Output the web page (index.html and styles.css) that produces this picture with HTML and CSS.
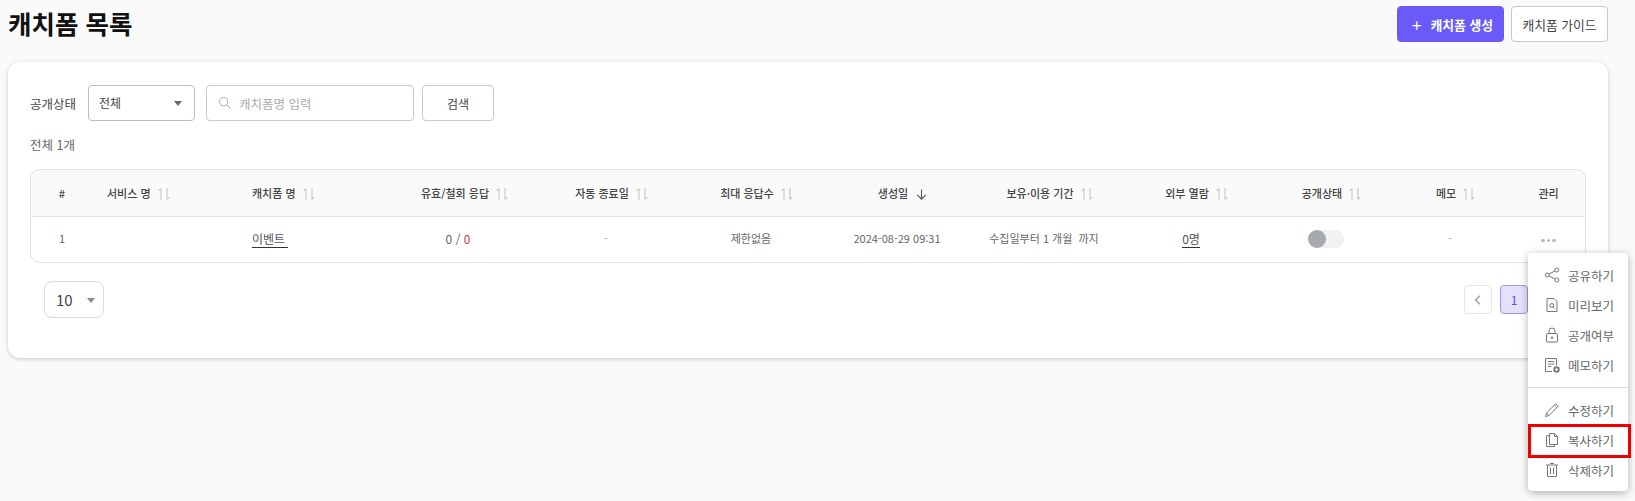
FILE: index.html
```html
<!DOCTYPE html>
<html lang="ko">
<head>
    <meta charset="UTF-8">
    <meta name="viewport" content="width=device-width, initial-scale=1.0">
    <title>캐치폼 목록</title>
    <link rel="stylesheet" href="styles.css">
</head>
<body>
    <svg class="sprites" aria-hidden="true">
        <symbol id="sort" viewBox="0 0 14 14">
            <path d="M4 13V1.500M4 1.500L1.800 3.800M10 1v11.500M10 12.500l2.200-2.300" fill="none" stroke="currentColor" stroke-width="1.200"/>
        </symbol>
    </svg>

    <header class="page-head">
        <h1>캐치폼 목록</h1>
        <div class="head-actions">
            <button class="btn btn-primary"><span class="plus">+</span>캐치폼 생성</button>
            <button class="btn btn-guide">캐치폼 가이드</button>
        </div>
    </header>

    <main class="card">
        <div class="filters">
            <label class="filter-label">공개상태</label>
            <div class="select">전체<span class="caret"></span></div>
            <div class="search-box">
                <svg class="search-icon" viewBox="0 0 16 16"><circle cx="6.500" cy="6.500" r="4.700" fill="none" stroke="currentColor" stroke-width="1.100"/><path d="M10 10l4.600 4.600" stroke="currentColor" stroke-width="1.100"/></svg>
                <span class="placeholder">캐치폼명 입력</span>
            </div>
            <button class="btn btn-search">검색</button>
        </div>

        <p class="total">전체 1개</p>

        <div class="table-wrap">
            <table class="list">
                <colgroup>
                    <col class="c-no"><col class="c-service"><col class="c-name"><col class="c-valid"><col class="c-auto"><col class="c-max"><col class="c-date"><col class="c-keep"><col class="c-view"><col class="c-open"><col class="c-memo"><col class="c-manage">
                </colgroup>
                <thead>
                    <tr>
                        <th>#</th>
                        <th class="left">서비스 명<svg class="sort"><use href="#sort"/></svg></th>
                        <th class="left">캐치폼 명<svg class="sort"><use href="#sort"/></svg></th>
                        <th class="valid-head">유효/철회 응답<svg class="sort"><use href="#sort"/></svg></th>
                        <th>자동 종료일<svg class="sort"><use href="#sort"/></svg></th>
                        <th>최대 응답수<svg class="sort"><use href="#sort"/></svg></th>
                        <th>생성일<svg class="sort-active" viewBox="0 0 14 14"><path d="M7 1.500V12M2.500 7.500L7 12l4.500-4.500" fill="none" stroke="currentColor" stroke-width="1.200"/></svg></th>
                        <th>보유·이용 기간<svg class="sort"><use href="#sort"/></svg></th>
                        <th>외부 열람<svg class="sort"><use href="#sort"/></svg></th>
                        <th>공개상태<svg class="sort"><use href="#sort"/></svg></th>
                        <th>메모<svg class="sort"><use href="#sort"/></svg></th>
                        <th>관리</th>
                    </tr>
                </thead>
                <tbody>
                    <tr>
                        <td>1</td>
                        <td class="left"></td>
                        <td class="left"><a class="link name-link">이벤트&nbsp;</a></td>
                        <td class="count">0 / <span class="red">0</span></td>
                        <td class="muted off">-</td>
                        <td class="off">제한없음</td>
                        <td class="off">2024-08-29 09:31</td>
                        <td class="off">수집일부터 1 개월&nbsp; 까지</td>
                        <td class="count off"><a class="link">0명</a></td>
                        <td class="off"><span class="toggle"><span class="knob"></span></span></td>
                        <td class="muted off">-</td>
                        <td><span class="dots"><i></i><i></i><i></i></span></td>
                    </tr>
                </tbody>
            </table>
        </div>

        <div class="table-foot">
            <div class="page-size">10<span class="caret"></span></div>
            <nav class="pager">
                <button class="page-btn">
                    <svg viewBox="0 0 10 10"><path d="M6.500 1.500L3 5l3.500 3.500" fill="none" stroke="currentColor" stroke-width="1.100"/></svg>
                </button>
                <button class="page-btn current">1</button>
                <button class="page-btn"></button>
            </nav>
        </div>
    </main>

    <!-- row action menu, opened from the ... button -->
    <ul class="row-menu">
        <li>
            <svg viewBox="0 0 16 16"><circle cx="3.200" cy="8" r="2"/><circle cx="12.800" cy="3" r="2"/><circle cx="12.800" cy="13" r="2"/><path d="M5 7.100l6-3.200M5 8.900l6 3.200"/></svg>
            공유하기
        </li>
        <li>
            <svg viewBox="0 0 16 16"><path d="M3 1.500h7l3 3v10H3z"/><circle cx="7.800" cy="8.500" r="2"/><path d="M9.300 10l1.500 1.500"/></svg>
            미리보기
        </li>
        <li>
            <svg viewBox="0 0 16 16"><rect x="2.500" y="6.500" width="11" height="8.500" rx="1"/><path d="M5 6.500V4a3 3 0 0 1 6 0v2.500"/><circle cx="8" cy="10.700" r=".8" fill="currentColor"/></svg>
            공개여부
        </li>
        <li>
            <svg viewBox="0 0 16 16"><path d="M8 14.500H1.500v-13h11v7"/><path d="M3.800 4.500h6.500M3.800 7h6.500M3.800 9.500h3.500"/><circle cx="12.500" cy="12.500" r="3.200" fill="currentColor" stroke="none"/><path d="M10.800 12.500h3.400M12.500 10.800v3.400" stroke="#fff"/></svg>
            메모하기
        </li>
        <li class="divider"></li>
        <li>
            <svg viewBox="0 0 16 16"><path d="M1.500 14.500l1-3.500L11.800 1.700l2.500 2.500L5 13.500z"/><path d="M10.300 3.200l2.500 2.500M2.500 11L5 13.500"/></svg>
            수정하기
        </li>
        <li class="picked">
            <svg viewBox="0 0 16 16"><path d="M5.500 1.500h5l3 3v8h-8z"/><path d="M10.500 1.500v3h3"/><path d="M5.500 3.800H2.500v10.700h8v-2"/></svg>
            복사하기
        </li>
        <li>
            <svg viewBox="0 0 16 16"><path d="M2 3h12M3.500 3v11.500h9V3M6 1.500h4"/><path d="M6.500 5.500v6.500M9.500 5.500v6.500"/></svg>
            삭제하기
        </li>
    </ul>
</body>
</html>
```

FILE: styles.css
```css
* {
    margin: 0;
    padding: 0;
    box-sizing: border-box;
}

body {
    font-family: "Noto Sans CJK KR", "Noto Sans", sans-serif;
    background: #fafafa;
    color: #444;
    font-size: 12px;
    height: 501px;
    overflow: hidden;
}

.sprites {
    display: none;
}

button {
    font-family: inherit;
}

.page-head {
    display: flex;
    justify-content: space-between;
    height: 62px;
    padding: 6px 27px 0 8px;
}

.page-head h1 {
    font-size: 25.5px;
    line-height: 34px;
    font-weight: 700;
    color: #111;
}

.head-actions {
    display: flex;
    gap: 7px;
    height: 36px;
}

.btn {
    height: 36px;
    border: 1px solid #c9c9c9;
    border-radius: 4px;
    background: #fff;
    font-size: 12.8px;
    color: #444;
}

.btn-primary {
    width: 107px;
    padding-left: 4px;
    background: #6a5af9;
    border-color: #6a5af9;
    color: #fff;
    font-weight: 700;
    display: flex;
    align-items: center;
    justify-content: center;
}

.plus {
    font-size: 17px;
    font-weight: 400;
    line-height: 1;
    margin-right: 9px;
}

.btn-guide {
    width: 97px;
}

.btn-search {
    width: 72px;
    margin-left: 8px;
    font-size: 12px;
}

.card {
    margin: 0 27px 0 8px;
    height: 296px;
    padding: 23px 22px 0;
    background: #fff;
    border-radius: 12px;
    box-shadow: 0 1px 4px rgba(0, 0, 0, 0.2);
}

.filters {
    display: flex;
    align-items: center;
    height: 36px;
}

.filter-label {
    font-size: 12.5px;
    margin-right: 12px;
}

.select {
    position: relative;
    width: 107px;
    height: 36px;
    line-height: 34px;
    padding-left: 10px;
    border: 1px solid #bdbdbd;
    border-radius: 4px;
    font-size: 12px;
}

.caret {
    position: absolute;
    right: 12px;
    top: 15px;
    width: 0;
    height: 0;
    border-left: 4.500px solid transparent;
    border-right: 4.500px solid transparent;
    border-top: 5px solid #666;
}

.search-box {
    display: flex;
    align-items: center;
    width: 208px;
    height: 36px;
    margin-left: 11px;
    padding-left: 11px;
    border: 1px solid #c9c9c9;
    border-radius: 4px;
}

.search-icon {
    width: 14px;
    height: 14px;
    color: #aaa;
    margin-right: 7px;
}

.placeholder {
    color: #aaa;
    font-size: 12.5px;
}

.total {
    height: 48px;
    padding-top: 15px;
    line-height: 18px;
    font-size: 12.5px;
    color: #666;
}

.table-wrap {
    border: 1px solid #e2e2e2;
    border-radius: 10px;
    overflow: hidden;
}

.list {
    width: 100%;
    border-collapse: collapse;
    table-layout: fixed;
}

.c-no { width: 62px; }
.c-service { width: 145px; }
.c-name { width: 132px; }
.c-valid { width: 176px; }
.c-auto { width: 132px; }
.c-max { width: 158px; }
.c-date { width: 134px; }
.c-keep { width: 160px; }
.c-view { width: 134px; }
.c-open { width: 136px; }
.c-memo { width: 112px; }

.list th {
    height: 46px;
    background: #fafafa;
    border-bottom: 1px solid #e2e2e2;
    font-size: 11px;
    font-weight: 500;
    color: #444;
    text-align: center;
    white-space: nowrap;
}

.list td {
    height: 46px;
    padding-bottom: 2px;
    font-size: 11px;
    color: #666;
    text-align: center;
    white-space: nowrap;
}

/* header carries the sort icon, so body cells sit a little left of it */
.list td.off {
    padding-right: 12px;
}

.list .valid-head {
    padding-left: 14px;
}

.list .left {
    text-align: left;
    padding-left: 14px;
}

.list .muted {
    color: #aaa;
}

.list .count {
    font-size: 12px;
}

.sort {
    width: 14px;
    height: 14px;
    margin-left: 6px;
    vertical-align: -3px;
    color: #ccc;
}

.sort-active {
    width: 13px;
    height: 13px;
    margin-left: 7px;
    vertical-align: -3px;
    color: #555;
}

.link {
    color: #555;
    font-size: 12px;
    border-bottom: 1px solid #333;
}

.red {
    color: #d0393e;
}

.toggle {
    display: inline-block;
    width: 36px;
    height: 18px;
    border-radius: 9px;
    background: #f1f1f1;
    vertical-align: middle;
}

.knob {
    display: block;
    width: 18px;
    height: 18px;
    border-radius: 50%;
    background: #a6a9ae;
}

.dots {
    display: inline-flex;
    gap: 2px;
    vertical-align: middle;
}

.dots i {
    width: 3.500px;
    height: 3.500px;
    border-radius: 50%;
    background: #bbb;
}

.table-foot {
    display: flex;
    justify-content: space-between;
    align-items: center;
    padding: 18px 22px 0 14px;
}

.page-size {
    position: relative;
    width: 60px;
    height: 37px;
    line-height: 35px;
    padding-left: 11px;
    border: 1px solid #dcdcdc;
    border-radius: 8px;
    font-size: 15px;
}

.page-size .caret {
    right: 8px;
    top: 16px;
    border-top-color: #888;
}

.pager {
    display: flex;
    gap: 8px;
}

.page-btn {
    width: 28px;
    height: 29px;
    border: 1px solid #e6e6e6;
    border-radius: 4px;
    background: #fff;
    color: #999;
    font-size: 12px;
    display: flex;
    align-items: center;
    justify-content: center;
}

.page-btn svg {
    width: 12px;
    height: 12px;
}

.page-btn.current {
    background: #e6e1fb;
    border-color: #a095ec;
    color: #5b4ce0;
}

.row-menu {
    position: absolute;
    top: 253px;
    left: 1528px;
    width: 100px;
    height: 238px;
    padding: 7px 0 6px;
    list-style: none;
    background: #fff;
    border-radius: 4px;
    box-shadow: 0 2px 8px rgba(0, 0, 0, 0.3);
}

.row-menu li {
    position: relative;
    display: flex;
    align-items: center;
    height: 30px;
    padding-left: 16px;
    font-size: 12.5px;
    color: #666;
}

.row-menu svg {
    width: 16px;
    height: 16px;
    margin-right: 8px;
    fill: none;
    stroke: #777;
    stroke-width: 1;
    color: #777;
}

.row-menu .divider {
    height: 1px;
    margin: 7px 0;
    padding: 0;
    background: #ddd;
}

/* red marker round the copy item */
.row-menu .picked::after {
    content: "";
    position: absolute;
    top: -1px;
    bottom: -3px;
    left: 0;
    right: -3px;
    border: 3px solid #ee0000;
}
```
